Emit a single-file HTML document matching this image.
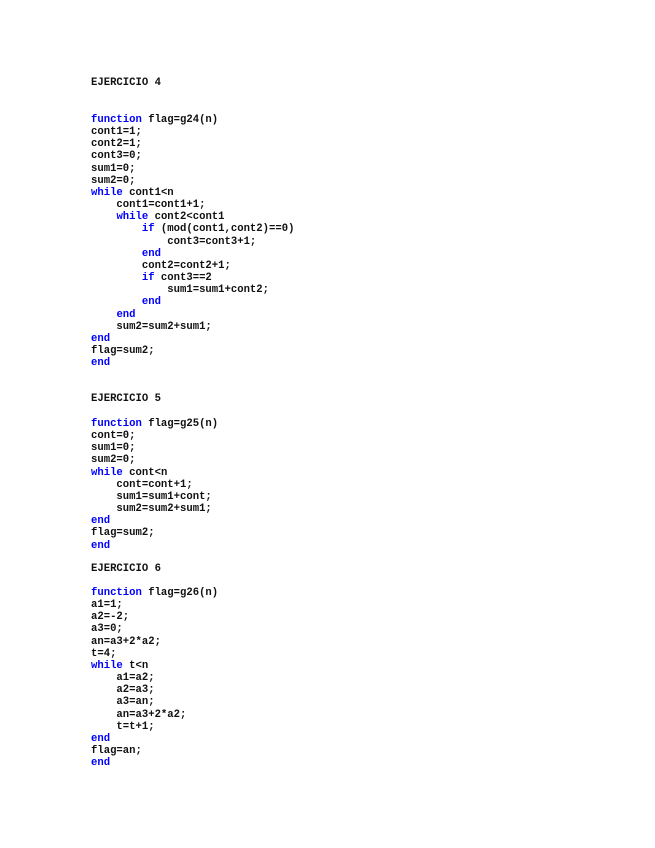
<!DOCTYPE html>
<html><head><meta charset="utf-8"><style>
html,body{margin:0;padding:0;background:#fff;width:655px;height:848px;overflow:hidden}
pre{position:absolute;left:91px;margin:0;font-family:"Liberation Mono",monospace;font-size:10.6px;line-height:12.15px;color:#111;font-weight:bold;letter-spacing:0}
b{color:#0000ff;font-weight:bold}
</style></head><body>
<pre style="top:77px">EJERCICIO 4</pre>
<pre style="top:114px"><b>function</b> flag=g24(n)
cont1=1;
cont2=1;
cont3=0;
sum1=0;
sum2=0;
<b>while</b> cont1&lt;n
    cont1=cont1+1;
    <b>while</b> cont2&lt;cont1
        <b>if</b> (mod(cont1,cont2)==0)
            cont3=cont3+1;
        <b>end</b>
        cont2=cont2+1;
        <b>if</b> cont3==2
            sum1=sum1+cont2;
        <b>end</b>
    <b>end</b>
    sum2=sum2+sum1;
<b>end</b>
flag=sum2;
<b>end</b></pre>
<pre style="top:393px">EJERCICIO 5</pre>
<pre style="top:418px"><b>function</b> flag=g25(n)
cont=0;
sum1=0;
sum2=0;
<b>while</b> cont&lt;n
    cont=cont+1;
    sum1=sum1+cont;
    sum2=sum2+sum1;
<b>end</b>
flag=sum2;
<b>end</b></pre>
<pre style="top:563px">EJERCICIO 6</pre>
<pre style="top:587px"><b>function</b> flag=g26(n)
a1=1;
a2=-2;
a3=0;
an=a3+2*a2;
t=4;
<b>while</b> t&lt;n
    a1=a2;
    a2=a3;
    a3=an;
    an=a3+2*a2;
    t=t+1;
<b>end</b>
flag=an;
<b>end</b></pre>
</body></html>
